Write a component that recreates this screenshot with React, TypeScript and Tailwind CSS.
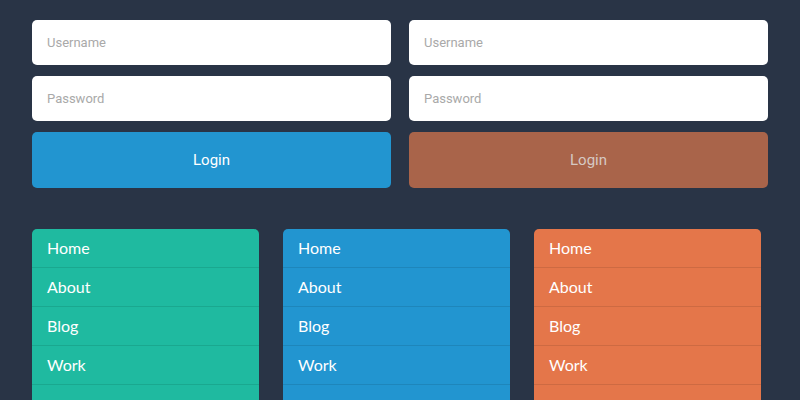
import React from 'react';

const menus = [
  { bg: 'bg-[#1fbaa0]', line: 'border-[#1aa88f]' },
  { bg: 'bg-[#2295d0]', line: 'border-[#1e86bb]' },
  { bg: 'bg-[#e4764a]', line: 'border-[#cd6a42]' },
];

const items = ['Home', 'About', 'Blog', 'Work', 'Contact'];

const LoginForm: React.FC<{ variant: 'blue' | 'rust' }> = ({ variant }) => (
  <div className="flex flex-col gap-[11px]">
    <input
      type="text"
      placeholder="Username"
      className="h-[45px] w-full rounded-[5px] bg-white px-[15px] text-[13px] text-gray-700 outline-none placeholder:text-[#a9a9a9]"
    />
    <input
      type="password"
      placeholder="Password"
      className="h-[45px] w-full rounded-[5px] bg-white px-[15px] text-[13px] text-gray-700 outline-none placeholder:text-[#a9a9a9]"
    />
    <button
      className={`h-[56px] w-full rounded-[5px] text-[15px] font-normal ${
        variant === 'blue' ? 'bg-[#2295d0] text-white' : 'bg-[#a9644a] text-[#d6c9c3]'
      }`}
    >
      Login
    </button>
  </div>
);

export default function App() {
  return (
    <div className="h-[400px] w-[800px] overflow-hidden bg-[#293446] px-[32px] pt-[20px] font-['Roboto',sans-serif]">
      <div className="grid w-[736px] grid-cols-2 gap-[18px]">
        <LoginForm variant="blue" />
        <LoginForm variant="rust" />
      </div>

      <div className="mt-[41px] flex gap-[24px] font-['Lato',sans-serif]">
        {menus.map((m, i) => (
          <ul key={i} className={`w-[227px] rounded-t-[5px] ${m.bg}`}>
            {items.map((it, j) => (
              <li
                key={it}
                className={`flex h-[39px] items-center px-[15px] text-[16px] text-white ${
                  j < items.length - 1 ? `border-b ${m.line}` : ''
                }`}
              >
                {it}
              </li>
            ))}
          </ul>
        ))}
      </div>
    </div>
  );
}
